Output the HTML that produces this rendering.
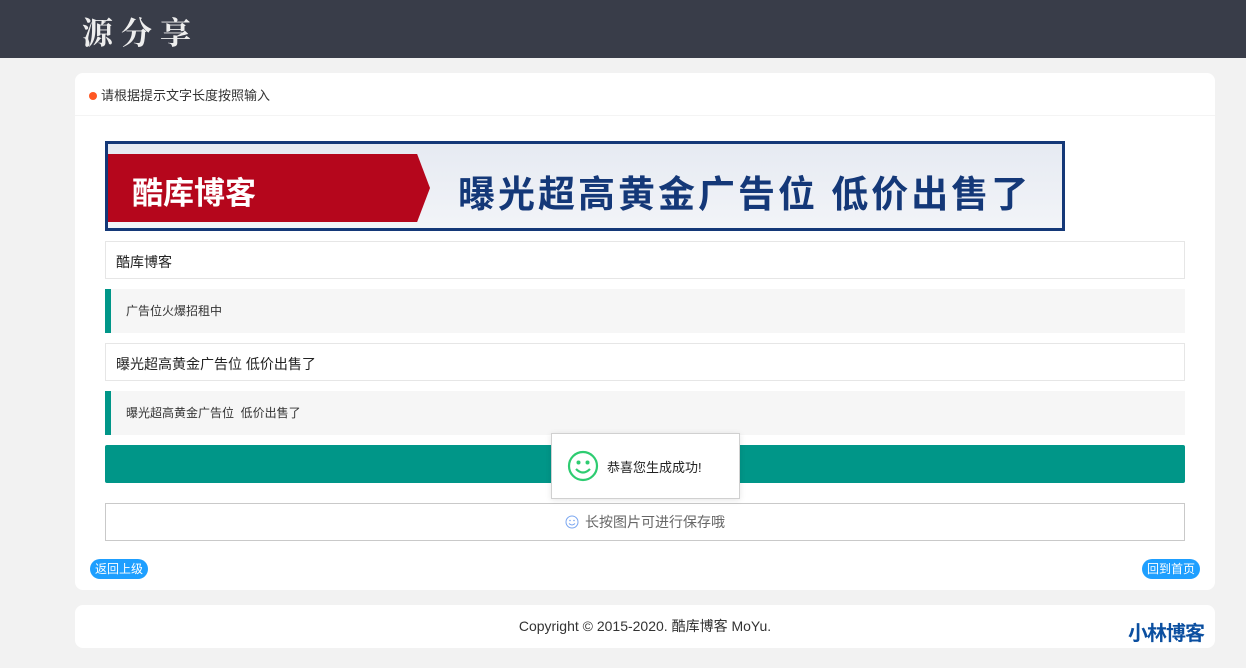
<!DOCTYPE html>
<html><head><meta charset="utf-8"><style>
*{margin:0;padding:0;box-sizing:border-box}
body{width:1246px;height:668px;background:#f2f2f2;font-family:"Liberation Sans","Noto Sans CJK SC",sans-serif;position:relative;overflow:hidden;color:#333}
.hdr{position:absolute;left:0;top:0;width:1246px;height:58px;background:#393d49}
.logo{position:absolute;left:82px;top:8px;font-family:"Noto Serif CJK SC",serif;font-size:31px;color:#eee;letter-spacing:8px;font-weight:bold}
.card{position:absolute;left:75px;top:73px;width:1140px;height:517px;background:#fff;border-radius:8px}
.tip{position:absolute;left:14px;top:12px;font-size:13px;color:#333}
.tip:before{content:"";display:inline-block;width:8px;height:8px;border-radius:50%;background:#ff5722;margin-right:4px}
.line{position:absolute;left:0;top:42px;width:100%;height:1px;background:#f4f4f4}
.ad{position:absolute;left:30px;top:68px;width:960px;height:90px;border:3px solid #143878;background:linear-gradient(#e6eaf2,#f2f4f8)}
.red{position:absolute;left:0;top:10px;width:322px;height:68px;background:#b5061c;clip-path:polygon(0 0,96% 0,100% 50%,96% 100%,0 100%)}
.red span{position:absolute;left:24px;top:14px;color:#fff;font-size:31px;font-weight:bold}
.blue{position:absolute;left:350px;top:20px;color:#143878;font-size:37px;font-weight:bold;letter-spacing:3px}
.inp{position:absolute;left:30px;width:1080px;height:38px;border:1px solid #e6e6e6;font-size:14px;padding:10px;color:#222}
.quote{position:absolute;left:30px;width:1080px;height:44px;background:#f6f6f6;border-left:6px solid #009688;font-size:12px;padding:13px 15px;color:#333}
.btn{position:absolute;left:30px;top:372px;width:1080px;height:38px;background:#009688;border-radius:2px}
.btn2{position:absolute;left:30px;top:430px;width:1080px;height:38px;border:1px solid #c9c9c9;font-size:14px;color:#666;text-align:center;line-height:36px}
.pill{position:absolute;top:486px;height:20px;background:#1e9fff;color:#fff;font-size:12px;border-radius:10px;padding:0 5px;line-height:20px}
.toast{position:absolute;left:551px;top:433px;width:189px;height:66px;background:#fff;border:1px solid #d0d0d0;box-shadow:0 1px 6px rgba(0,0,0,.1)}
.toast span{position:absolute;left:55px;top:23px;font-size:13px;color:#222}
.foot{position:absolute;left:75px;top:605px;width:1140px;height:43px;background:#fff;border-radius:8px;text-align:center;line-height:43px;font-size:14px;color:#333}
.brand{position:absolute;left:1128px;top:617px;font-size:20px;font-weight:bold;color:#0b4fa0;letter-spacing:-1px}
</style></head><body>
<div class="hdr"><div class="logo">源分享</div></div>
<div class="card">
<div class="tip">请根据提示文字长度按照输入</div>
<div class="line"></div>
<div class="ad"><div class="red"><span>酷库博客</span></div><div class="blue">曝光超高黄金广告位 低价出售了</div></div>
<div class="inp" style="top:168px">酷库博客</div>
<div class="quote" style="top:216px">广告位火爆招租中</div>
<div class="inp" style="top:270px">曝光超高黄金广告位 低价出售了</div>
<div class="quote" style="top:318px">曝光超高黄金广告位&nbsp; 低价出售了</div>
<div class="btn"></div>
<div class="btn2"><svg width="14" height="14" viewBox="0 0 14 14" style="vertical-align:-2px;margin-right:6px"><circle cx="7" cy="7" r="6" fill="none" stroke="#7aa6f0" stroke-width="1"/><circle cx="5" cy="5.5" r=".8" fill="#7aa6f0"/><circle cx="9" cy="5.5" r=".8" fill="#7aa6f0"/><path d="M4 8.5q3 3 6 0" fill="none" stroke="#7aa6f0"/></svg>长按图片可进行保存哦</div>
<div class="pill" style="left:15px">返回上级</div>
<div class="pill" style="left:1067px">回到首页</div>
</div>
<div class="toast"><svg width="32" height="32" viewBox="0 0 32 32" style="position:absolute;left:15px;top:16px"><circle cx="16" cy="16" r="14" fill="none" stroke="#2ecc71" stroke-width="2.2"/><circle cx="11.5" cy="12.5" r="2" fill="#2ecc71"/><circle cx="20.5" cy="12.5" r="2" fill="#2ecc71"/><path d="M9 19q7 7 14 0" fill="none" stroke="#2ecc71" stroke-width="2.2"/></svg><span>恭喜您生成成功!</span></div>
<div class="foot">Copyright © 2015-2020. 酷库博客 MoYu.</div>
<div class="brand">小林博客</div>
</body></html>
